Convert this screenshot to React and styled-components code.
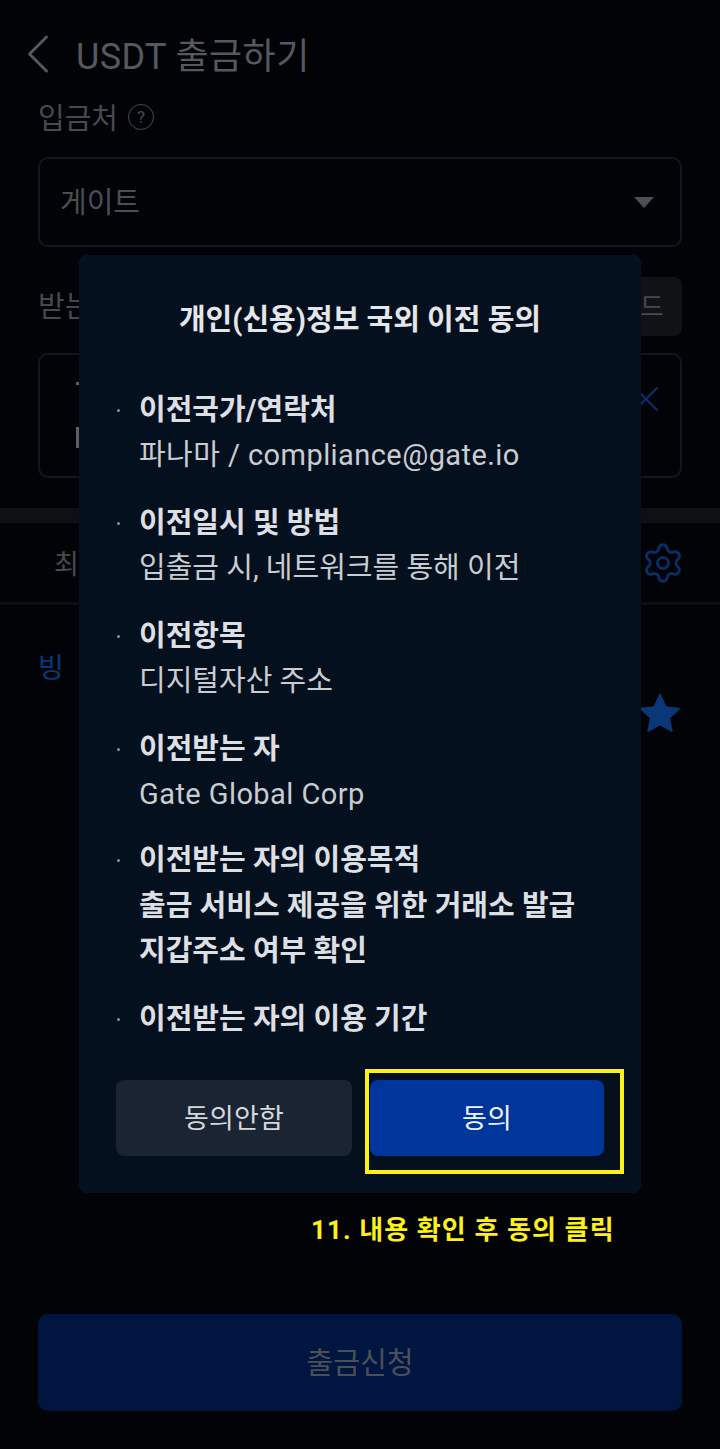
import React from 'react';
import styled, { createGlobalStyle } from 'styled-components';
import { ChevronLeft, Settings, X } from 'lucide-react';

const FONT = 'Roboto, "Noto Sans CJK KR", "Noto Sans", sans-serif';

const GlobalStyle = createGlobalStyle`
  html, body {
    margin: 0;
    padding: 0;
    background: #010307;
  }
  * {
    box-sizing: border-box;
  }
`;

// Page behind the dialog
const Page = styled.div`
  position: relative;
  width: 720px;
  height: 1449px;
  overflow: hidden;
  background: #010307;
  font-family: ${FONT};
  display: flex;
  flex-direction: column;
`;

const Header = styled.div`
  height: 98px;
  padding: 10px 0 0 4px;
  display: flex;
  align-items: center;
  gap: 4px;
`;

const Title = styled.div`
  font-size: 36px;
  letter-spacing: 0.4px;
  color: #55585d;
  padding-bottom: 3px;
`;

const Section = styled.div`
  padding: 0 38px;
`;

const LabelRow = styled.div`
  height: 38px;
  padding-bottom: 3px;
  display: flex;
  align-items: center;
  gap: 10px;
  font-size: 29px;
  color: #46494e;
`;

const Help = styled.span`
  width: 26px;
  height: 26px;
  margin-top: 3px;
  border: 1.5px solid #46494e;
  border-radius: 50%;
  display: flex;
  align-items: center;
  justify-content: center;
  font-size: 17px;
`;

const SelectBox = styled.div`
  height: 90px;
  margin-top: 21px;
  padding: 0 26px 4px 20px;
  border: 2px solid #12161d;
  border-radius: 10px;
  display: flex;
  align-items: center;
  justify-content: space-between;
  font-size: 29px;
  color: #4b4e53;
`;

const Caret = styled.span`
  width: 0;
  height: 0;
  margin-top: 4px;
  border-left: 10px solid transparent;
  border-right: 10px solid transparent;
  border-top: 11px solid #4b4e53;
`;

const ReceiveRow = styled.div`
  height: 59px;
  margin-top: 30px;
  display: flex;
  align-items: center;
  justify-content: space-between;
  font-size: 29px;
  color: #46494e;
`;

const ReceiveLabel = styled.span`
  margin-bottom: 5px;
`;

const GuideButton = styled.div`
  width: 100px;
  height: 59px;
  padding: 0 18px 5px 0;
  background: #101215;
  border-radius: 8px;
  display: flex;
  align-items: center;
  justify-content: flex-end;
  font-size: 26px;
  color: #46494e;
`;

const AddressBox = styled.div`
  height: 125px;
  margin-top: 17px;
  padding: 22px 12px 0 36px;
  border: 2px solid #12161d;
  border-radius: 10px;
  display: flex;
  align-items: flex-start;
  justify-content: space-between;
  color: #0a2f6a;
`;

// Slivers of the address text that stick out left of the dialog
const AddressSliver = styled.div`
  display: flex;
  flex-direction: column;
  gap: 42px;
  padding-top: 5px;
`;

const SliverMark = styled.span`
  display: block;
  width: 3px;
  height: ${(p) => p.$height}px;
  background: #5d6063;
`;

const Band = styled.div`
  height: 15px;
  margin-top: 30px;
  background: #0e1013;
`;

const TabRow = styled.div`
  height: 82px;
  padding: 0 35px 0 54px;
  border-bottom: 3px solid #0c0e11;
  display: flex;
  align-items: center;
  justify-content: space-between;
  font-size: 27px;
  color: #46494e;
  svg {
    color: #0a2c63;
  }
`;

const SavedRow = styled.div`
  padding: 41px 38px 0;
  display: flex;
  justify-content: space-between;
  font-size: 28px;
  color: #0b3778;
`;

const Star = styled.svg`
  width: 44px;
  height: 44px;
  margin-top: 45px;
  fill: #0b3778;
  stroke: #0b3778;
  stroke-width: 1;
  stroke-linejoin: round;
`;

const Submit = styled.div`
  height: 97px;
  margin: auto 38px 38px;
  padding-bottom: 5px;
  background: #00153f;
  border-radius: 10px;
  display: flex;
  align-items: center;
  justify-content: center;
  font-size: 29.2px;
  color: #4a5058;
`;

// Dialog
const Modal = styled.div`
  position: absolute;
  left: 79px;
  top: 255px;
  width: 562px;
  height: 938px;
  padding: 0 37px;
  background: #04101e;
  border-radius: 8px;
  display: flex;
  flex-direction: column;
`;

const ModalTitle = styled.h2`
  margin: 44px 0 47px;
  font-size: 29px;
  line-height: 42px;
  font-weight: 700;
  text-align: center;
  color: #e4e6e9;
`;

const TermList = styled.ul`
  margin: 0;
  padding: 0;
  list-style: none;
  display: flex;
  flex-direction: column;
  gap: 23px;
`;

const Term = styled.li`
  position: relative;
  padding-left: 23px;
  margin-top: ${(p) => p.$shift || 0}px;
  font-size: 29px;
  line-height: 45.5px;
  color: #c9cdd2;
  &::before {
    content: '';
    position: absolute;
    left: 1px;
    top: 21px;
    width: 3px;
    height: 3px;
    border-radius: 50%;
    background: #8b9097;
  }
`;

const TermHead = styled.div`
  font-weight: 700;
  color: #dcdfe3;
`;

const TermBody = styled.div`
  margin-top: -1px;
  letter-spacing: ${(p) => (p.$latin ? 0.43 : 0)}px;
`;

const ButtonRow = styled.div`
  margin-top: auto;
  margin-bottom: 37px;
  display: flex;
  gap: 18px;
`;

const DialogButton = styled.button`
  width: ${(p) => (p.$primary ? 234 : 236)}px;
  height: 76px;
  padding: 0 0 4px;
  border: none;
  border-radius: 8px;
  background: ${(p) => (p.$primary ? '#00359c' : '#1b2433')};
  color: ${(p) => (p.$primary ? '#f2f4f8' : '#d5d8dd')};
  font-family: ${FONT};
  font-size: 27px;
  letter-spacing: 0.2px;
`;

// Yellow guide marks drawn over the screenshot
const Highlight = styled.div`
  position: absolute;
  left: 365px;
  top: 1069px;
  width: 259px;
  height: 105px;
  border: 4px solid #fff01a;
`;

const Note = styled.div`
  position: absolute;
  left: 311px;
  top: 1212px;
  font-size: 26px;
  line-height: 36px;
  font-weight: 700;
  letter-spacing: 1.1px;
  color: #fff01a;
`;

const terms = [
  { head: '이전국가/연락처', body: '파나마 / compliance@gate.io', latin: true },
  { head: '이전일시 및 방법', body: '입출금 시, 네트워크를 통해 이전' },
  { head: '이전항목', body: '디지털자산 주소' },
  { head: '이전받는 자', body: 'Gate Global Corp', latin: true },
  { head: '이전받는 자의 이용목적', bold: ['출금 서비스 제공을 위한 거래소 발급', '지갑주소 여부 확인'], shift: -2 },
  { head: '이전받는 자의 이용 기간', shift: -1 },
];

const App = () => {
  return (
    <Page>
      <GlobalStyle />
      <Header>
        <ChevronLeft size={68} color="#55585d" strokeWidth={1} />
        <Title>USDT 출금하기</Title>
      </Header>
      <Section>
        <LabelRow>
          입금처<Help>?</Help>
        </LabelRow>
        <SelectBox>
          게이트
          <Caret />
        </SelectBox>
        <ReceiveRow>
          <ReceiveLabel>받는</ReceiveLabel>
          <GuideButton>드</GuideButton>
        </ReceiveRow>
        <AddressBox>
          <AddressSliver>
            <SliverMark $height={3} />
            <SliverMark $height={21} />
          </AddressSliver>
          <X size={44} strokeWidth={1.2} />
        </AddressBox>
      </Section>
      <Band />
      <TabRow>
        최
        <Settings size={44} strokeWidth={1.6} />
      </TabRow>
      <SavedRow>
        빙
        <Star viewBox="0 0 24 24">
          <path d="M12 2l3.100 6.800 7.200.9-5.300 5 1.400 7.100L12 18.200l-6.400 3.600 1.400-7.100-5.300-5 7.200-.9z" />
        </Star>
      </SavedRow>
      <Submit>출금신청</Submit>

      <Modal>
        <ModalTitle>개인(신용)정보 국외 이전 동의</ModalTitle>
        <TermList>
          {terms.map((term) => (
            <Term key={term.head} $shift={term.shift}>
              <TermHead>{term.head}</TermHead>
              {term.bold && term.bold.map((line) => <TermHead key={line}>{line}</TermHead>)}
              {term.body && <TermBody $latin={term.latin}>{term.body}</TermBody>}
            </Term>
          ))}
        </TermList>
        <ButtonRow>
          <DialogButton>동의안함</DialogButton>
          <DialogButton $primary>동의</DialogButton>
        </ButtonRow>
      </Modal>

      <Highlight />
      <Note>11. 내용 확인 후 동의 클릭</Note>
    </Page>
  );
};

export default App;
